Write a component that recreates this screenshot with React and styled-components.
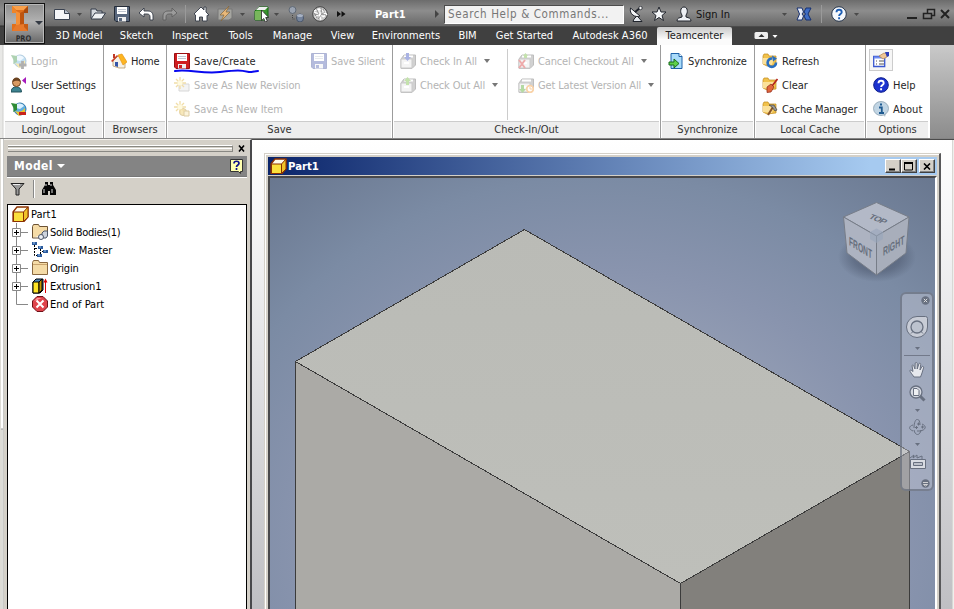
import React from "react";
import styled, { createGlobalStyle, css } from "styled-components";

const Global = createGlobalStyle`
  * { box-sizing: border-box; }
  html, body { margin: 0; padding: 0; overflow: hidden; }
  body { font-family: "DejaVu Sans Condensed", "DejaVu Sans", sans-serif; font-size: 11px; font-stretch: condensed; color: #1c1c1c; }
`;

/* ---------- frame ---------- */
const Page = styled.div`
  width: 954px; height: 609px; overflow: hidden; display: flex; flex-direction: column; background: #d4d0c8;
`;
const Header = styled.header`
  height: 45px; flex: none; display: flex; padding-left: 4px;
  background: linear-gradient(#777 0, #8b8b8b 10px, #6b6b6b 25px, #2e2e2e 26px, #404040 27px, #404040 100%);
`;
const AppButton = styled.div`
  width: 41px; height: 41px; margin-top: 3px; flex: none; border: 1px solid #111;
  background: linear-gradient(#8e8e8e, #b2b2b2 45%, #686868); display: flex; box-shadow: inset 0 0 0 1px #b9b9b9;
`;
const HeaderMain = styled.div`flex: 1; display: flex; flex-direction: column;`;
const QuickBar = styled.div`
  height: 27px; display: flex; align-items: center; padding-top: 1px;
  background: linear-gradient(#6c6c6c, #8d8d8d 40%, #686868 95%, #3a3a3a);
`;
const Slot = styled.div`
  width: ${p => p.$w}px; margin-left: ${p => p.$ml || 0}px; flex: none; display: flex; align-items: center;
  svg { flex: none; }
`;
const Rule = styled.div`width: 1px; height: 18px; flex: none; margin-left: ${p => p.$ml}px; background: #9a9a9a;`;
const Caption = styled.div`
  font-weight: bold; font-size: 11px; color: #fff; white-space: nowrap; letter-spacing: ${p => p.$ls || 0}px;
`;
const Search = styled.div`
  width: 180px; height: 19px; margin-left: 4px; flex: none; background: #f2f2f2; border: 1px solid #4c4c4c;
  border-right-color: #fff; border-bottom-color: #fff; color: #777; line-height: 16px; padding-left: 3px;
  white-space: nowrap; font-size: 11.500px; letter-spacing: .620px;
`;
const SignIn = styled.div`width: 36px; margin-left: 4px; flex: none; color: #111; white-space: nowrap;`;
const Tabs = styled.nav`height: 18px; display: flex; padding-left: 2px; align-items: flex-end;`;
const Tab = styled.div`
  width: ${p => p.$w}px; height: 18px; line-height: 17px; text-align: center; white-space: nowrap; flex: none; color: #fff;
  ${p => p.$on && css`color: #222; background: linear-gradient(#c8c8c8, #fbfbfb 70%); border-radius: 2px 2px 0 0;`}
`;

/* ---------- ribbon ---------- */
const Ribbon = styled.div`
  height: 94px; flex: none; display: flex; padding-left: 4px; border-bottom: 1px solid #858585;
  background: linear-gradient(90deg, #e8e8e6 0 2px, #d0d0ce 3px, #fff 4px 929px, transparent 930px),
    linear-gradient(#c9c9c9, #8c8c8c);
`;
const Group = styled.section`
  width: ${p => p.$w}px; flex: none; display: flex; flex-direction: column; background: #fff;
  border-right: 1px solid ${p => (p.$last ? "#fff" : "#9c9c9c")};
`;
const Columns = styled.div`flex: 1; display: flex; padding: 4px 0 0 7px;`;
const Column = styled.div`width: ${p => (p.$w ? `${p.$w}px` : "auto")}; flex: none;`;
const ColumnRule = styled.div`width: 1px; height: 71px; background: #ccc; margin-right: 10px;`;
const GroupTitle = styled.div`
  height: 17px; margin: 0 1px; background: #eee; border-top: 1px solid #ccc; text-align: center; line-height: 15px;
  color: #333; white-space: nowrap;
`;
const Command = styled.div`
  height: 24px; display: flex; align-items: center; white-space: nowrap; color: ${p => (p.$off ? "#b4b4b4" : "#262626")};
  letter-spacing: ${p => p.$ls || 0}px;
  > svg:first-child { margin-right: 4px; flex: none; opacity: ${p => (p.$off ? 0.38 : 1)}; }
`;
const ToolFrame = styled.div`
  width: 24px; height: 22px; margin: 0 0 2px -4px; border: 1px solid #ccc; background: #f6f6f6; display: flex; align-items: center; justify-content: center;
`;
const Marked = styled.div`position: relative;`;
const Squiggle = styled.svg`position: absolute; left: 0; top: 19px;`;
const More = styled.i`
  margin-left: ${p => p.$ml || 7}px; border: ${p => p.$s || 3}px solid transparent; border-top: 4px solid ${p => p.$c || "#777"}; border-bottom: 0;
`;

/* ---------- body ---------- */
const Body = styled.main`flex: 1; display: flex; min-height: 0;`;
const EdgeStrip = styled.div`
  width: 4px; flex: none; background: linear-gradient(#fff 0 289px, #999 290px, #dcdcd8 291px);
  border-left: 1px solid #dddbd5; border-right: 1px solid #c9c9c6;
`;
const Browser = styled.aside`
  width: 248px; flex: none; background: #d4d0c8; border-right: 2px solid #48484b; border-top: 1px solid #f3f1ec;
  padding: 5px 3px 0 3px; display: flex; flex-direction: column;
`;
const Grip = styled.div`height: 11px; display: flex; flex: none; padding-left: 1px;`;
const GripBar = styled.div`
  width: 225px; height: 7px; border: 1px solid #898883; border-top-color: #fff; border-left: 0; margin-right: 5px;
  background: linear-gradient(#898883 0 1px, #d4d0c8 1px 2px, #fff 2px 3px, #d4d0c8 3px);
`;
const PanelTitle = styled.div`
  height: 21px; width: 240px; flex: none; background: #848484; display: flex; align-items: center; padding: 0 4px 0 7px; color: #fff;
  font-weight: bold; font-size: 12px; justify-content: space-between;
  border-bottom: 1px solid #777;
`;
const PanelName = styled.span`display: flex; align-items: center; letter-spacing: .400px;`;
const PanelTools = styled.div`
  height: 27px; flex: none; border-top: 1px solid #fff; display: flex; align-items: center; padding: 0 0 4px 3px;
`;
const ToolRule = styled.div`width: 1px; height: 18px; background: #888; margin: 0 7px 0 8px; box-shadow: 1px 0 #fff;`;
const Tree = styled.div`
  width: 240px; flex: 1; background: #fff; border: 1px solid #000; border-bottom: 0; padding-left: 4px;
`;
const Node = styled.div`
  height: 18px; display: flex; align-items: center; white-space: nowrap; color: #000; letter-spacing: ${p => p.$ls || 0}px;
  svg { flex: none; margin-right: 2px; }
`;
const Workspace = styled.div`
  flex: 1; border-top: 1px solid #4b4b4b; padding: 13px 0 0 12px; display: flex;
  background: linear-gradient(#fff 0, #f6f6f7 80px, #bfbfc3 470px);
`;
const Document = styled.div`
  width: 677px; flex: none; background: #d4d0c8; border: solid; border-width: 1px 2px 0 1px; border-color: #d4d0c8 #58585a #000 #d4d0c8;
  padding: 0 2px 0 3px; box-shadow: inset 1px 1px #fff; display: flex; flex-direction: column;
`;
const DocTitle = styled.div`
  height: 18px; margin-top: 3px; flex: none; display: flex; align-items: center; padding: 0 2px 0 2px;
  background: linear-gradient(90deg, #0a246a, #a6caf0 90%);
`;
const DocName = styled(Caption)`flex: 1; margin-left: 1px; font-size: 11.300px;`;
const WinButton = styled.div`
  width: 16px; height: 14px; margin-right: ${p => p.$mr || 0}px; background: #d4d0c8; border: 1px solid; border-color: #fff #404040 #404040 #fff;
  box-shadow: inset -1px -1px #848484; display: flex; align-items: center; justify-content: center;
`;
const Viewport = styled.div`
  flex: 1; margin-top: 1px; border: 2px solid #48484b; border-right-color: #fff; border-bottom: 0; position: relative; overflow: hidden;
  background: radial-gradient(ellipse 480px 430px at 333px 360px, #9ba4b8 0, #949eb4 45%, #8994ae 62%, #7b8ba4 84%, #68768e 110%);
`;
const Scene = styled.svg`display: block;`;
const NavBar = styled.div`
  position: absolute; left: 630px; top: 114px; width: 34px; height: 199px; border: 2px solid rgba(90,96,112,.6); border-radius: 6px;
  background: rgba(205,208,220,.42); display: flex; flex-direction: column; align-items: center;
`;
const NavRule = styled.div`width: 26px; height: 1px; background: #72798a; margin: 5px 0;`;
const NavGap = styled.div`height: ${p => p.$h}px; flex: none;`;
const NavCorner = styled.div`align-self: flex-end; margin: 2px 2px 0 0; height: 9px; display: flex;`;
const TailStrip = styled.div`width: 2px; margin: -13px 0 0 auto; background: #efefed; border-left: 1px solid #d8d8d4;`;

/* ---------- icons ---------- */
const I = ({ w = 16, h = 16, children, ...r }) => (
  <svg width={w} height={h} viewBox={`0 0 ${w} ${h}`} fill="none" {...r}>{children}</svg>
);
const Down = ({ c = "#4a4a4a" }) => <I w={5} h={3}><path d="M0 0h5L2.500 3z" fill={c} /></I>;

const AppLogo = () => (
  <I w={39} h={39}>
    <path d="M7 2h16v7h-4v11h4v7H7v-7h4V9H7z" fill="#e06f1c" />
    <path d="M7 2h16l-4 4h-8z" fill="#f9a04a" /><path d="M7 2l4 4v3H7z" fill="#ef8529" />
    <path d="M11 7l4 2v11l-4 4z" fill="#f59038" />
    <path d="M19 7l-4 2v14l4-2z" fill="#bd5410" /><path d="M7 27l4-6 8-1 4 7z" fill="#e8792a" /><path d="M19 9h4V2l-4 4z" fill="#a94a0e" /><path d="M23 20h-4v3l4 4z" fill="#c65d16" />
    <path d="M30 17h8l-4 4z" fill="#343a44" />
    <text x="11" y="36.500" fontSize="7.500" fill="#222" stroke="#222" strokeWidth=".300" textLength="15">PRO</text>
  </I>
);
const NewIcon = () => <I><path d="M.500 3.500h10l5 4v6H.500z" fill="#f5f6f8" stroke="#3a4250" /><path d="M10.500 3.500v4h5" fill="#b8c0cc" stroke="#3a4250" /></I>;
const OpenIcon = () => <I><path d="M1 12V3h5l1 2h5v2" fill="#d4d9df" stroke="#333b49" /><path d="M1 13l4-6h10.500l-4 6z" fill="#eef1f4" stroke="#333b49" /></I>;
const SaveIcon = ({ c = "#59677d", s = "#252c38" }) => (
  <I><path d="M.500.500h15v15H2l-1.500-1.500z" fill={c} stroke={s} /><path d="M3 1h10v7H3z" fill="#fff" /><path d="M4 3.500h8M4 5.500h8" stroke="#c0c6d0" /><path d="M4 11h8v4.500H4z" fill="#eee" /><path d="M5 12h3v3H5z" fill={c} /></I>
);
const UndoIcon = () => <I><path d="M1 7l5-5v3h4c4 0 5 3 5 5v4h-3v-3c0-2-1-3-3-3H6v3z" fill="#fff" stroke="#333a46" strokeWidth=".900" /></I>;
const RedoIcon = () => <I><path d="M15 7l-5-5v3H6c-4 0-5 3-5 5v4h3v-3c0-2 1-3 3-3h3v3z" fill="#9b9b9b" stroke="#5f5f5f" strokeWidth=".900" /></I>;
const HomeWhite = () => <I><path d="M1 8l7-7 3 3V1h2v5l3 3-2 .500V15H9.500v-4h-3v4H2.500V9z" fill="#fff" stroke="#333a46" strokeWidth=".900" /></I>;
const BoltIcon = () => <I><path d="M1 3h14v9l-3 2H1z" fill="#a5a5a0" stroke="#777" /><path d="M12 0L3 9h4l-3 6 9-9H9z" fill="#e9b878" stroke="#80643e" strokeWidth=".700" /></I>;
const CubePick = () => <I w={15}><path d="M1 5l4-4h9v10l-3 3H1z" fill="#39952c" stroke="#176a12" /><path d="M5 1h9l-3 3H2z" fill="#eee" /><path d="M1 5h9v9H1z" fill="#78b65b" /><path d="M7.500 4v10.500l2.300-2 1.500 3.500 2-1-1.600-3.500h3z" fill="#fff" stroke="#222" strokeWidth=".800" /></I>;
const LinkIcon = () => <I><circle cx="4.500" cy="4" r="3.500" fill="#9aa3b1" stroke="#5f6874" /><ellipse cx="12" cy="12" rx="3.500" ry="4" fill="#75849c" stroke="#4b576b" /><ellipse cx="12" cy="9.500" rx="3" ry="1.500" fill="#a9b3c4" /><path d="M4.500 9v4H7" stroke="#444" strokeDasharray="1 1" /></I>;
const MeshBall = () => <I><circle cx="8" cy="8" r="7.300" fill="#c9c9c9" stroke="#444" /><path d="M2 5l5-2 5 2 3 4M3 11l4-3 5 3M7 3v5l2 6M12 5l-5 3M2 6l5 2M12 11l1-6" stroke="#fff" strokeWidth="1.300" /><path d="M4 2l3 6-4 1M9 2l1 6 4 1M6 13l4-5M2 7l3 5M11 3l2 4" stroke="#777" strokeWidth=".700" /></I>;
const DishIcon = () => <I w={14}><path d="M4 15.500h9l-3-3.500-2-2-3 3z" fill="#e4e7ec" stroke="#20242c" /><path d="M1.500 2C0 8 6 12 11 10z" fill="#f5f6f8" stroke="#20242c" /><path d="M6 6l5-4" stroke="#20242c" strokeWidth="2" /><circle cx="11.500" cy="2" r="1.700" fill="#fff" stroke="#20242c" strokeWidth=".800" /></I>;
const StarIcon = () => <I><path d="M8 1l2 5h5l-4 3.500 1.500 5L8 11.500l-4.500 3 1.500-5L1 6h5z" fill="#f4f6f8" stroke="#20242c" /></I>;
const UserIcon = () => <I><path d="M1 15c0-3 2-3 5-4V9C4 7 4 1 8 1s4 6 2 8v2c3 1 5 1 5 4z" fill="#eef0f4" stroke="#20242c" /></I>;
const XIcon = () => <I><path d="M1 2h5l1.500 4L6 8l1.500 2L6 14H1l2.500-6z" fill="#e8edf8" stroke="#173070" /><path d="M15 2h-5L8 6l1.500 2L8 10l2 4h5l-3-6z" fill="#3e6cc4" stroke="#173070" /></I>;
const HelpRound = ({ bg = "#f5f8fc", fg = "#1f5fb5", st = "#27364c" }) => <I><circle cx="8" cy="8" r="7.300" fill={bg} stroke={st} /><path d="M5.500 6.200c0-3.200 5.200-3.200 5.200 0C10.700 8 8.100 8 8.100 10M8.100 11.300v2" stroke={fg} strokeWidth="1.900" /></I>;

const Globe = ({ kind }) => (
  <I><circle cx="9" cy="8" r="6" fill="#5faee0" stroke="#3177a9" /><path d="M5 4c3-3 7-1 8 1l-4 3-4-1z" fill="#d9efff" /><path d="M0 2l6 1v6l-4 2c2-4-1-6-2-9z" fill="#2e8b36" /><path d="M4 10c4 2 8 0 10-3v5l-6 3z" fill="#ecc42f" />
    {kind === "out" ? <path d="M8 11h7v3H8z" fill="#c8221c" /> : <path d="M11.500 8v8M8 12h7.500" stroke="#333" strokeWidth="2.800" />}</I>
);
const UserSet = () => <I><path d="M0 15c0-7 10.500-7 10.500 0z" fill="#3d8390" stroke="#22525c" /><circle cx="5.500" cy="5.500" r="4" fill="#d99a62" stroke="#73461f" /><path d="M1.500 5c0-6 8-6 8 0-3-2-5-1-8 0z" fill="#6b4321" /><path d="M15 0v7l-4-3.500z" fill="#a51abb" /></I>;
const HomeColor = () => <I><path d="M2 8l5-5 7 5v7H8l-6-2z" fill="#f5f1e9" stroke="#b08c55" strokeWidth=".700" /><path d="M7 2l4-1 5 8-4 3z" fill="#fdb522" stroke="#e08e0b" strokeWidth=".600" /><path d="M0 8l6-6 1 1-5.500 6z" fill="#c9422a" /><path d="M2 1h2v4H2z" fill="#c03a27" /><path d="M4 9h3v5l-3-1z" fill="#3556a8" /></I>;
const Sun = () => <path d="M6 0v12M0 6h12M2 2l8 8M10 2l-8 8" stroke="#dca91d" strokeWidth="1.300" />;
const NewRev = () => <I><path d="M5 7h10v7H5z" fill="#e0e0e0" stroke="#999" /><Sun /><circle cx="6" cy="6" r="2.500" fill="#fff2ad" /></I>;
const NewItem = () => <I><circle cx="9" cy="11" r="3.500" fill="#ecc34d" stroke="#a67a12" /><path d="M10 10h5v5h-5z" fill="#f7e2a0" stroke="#a67a12" /><Sun /><circle cx="6" cy="6" r="2.500" fill="#fff2ad" /></I>;
const Tray = ({ kind }) => (
  <I><path d="M1 6l3-4h11.500v10L12 15.500H1z" fill="#888" stroke="#555" /><path d="M1 6h11v9H1z" fill="#e4e4e4" stroke="#777" /><path d="M4 3.500h9M4 10h5" stroke="#fff" strokeWidth="2" />
    {kind === "in" && <path d="M6 0h3v4h2L7.500 8 4 4h2z" fill="#2036b8" />}
    {kind === "out" && <path d="M6 8h3V4h2L7.500 0 4 4h2z" fill="#65b52a" />}
    {kind === "x" && <><path d="M1 7l6 8M7 7l-6 8" stroke="#d32323" strokeWidth="2" /><path d="M6 5h3V3h1L7.500 0 5 3h1z" fill="#65b52a" /></>}
    {kind === "get" && <><path d="M3 8h3v4h2l-3.500 4L1 12h2z" fill="#3f9f10" /><circle cx="12" cy="12" r="3.300" fill="#fff" stroke="#f08a1a" strokeWidth="1.700" /><path d="M12 10v2h2" stroke="#f08a1a" /></>}</I>
);
const SyncIcon = () => <I><path d="M3 .500h8l3 3v12H3z" fill="#a9dbfa" stroke="#1e62a9" /><path d="M11 .500v3h3" fill="#fff" stroke="#1e62a9" /><path d="M1 9h5V6l5 4.500L6 15v-3H1z" fill="#5ed04a" stroke="#166b1c" /></I>;
const Folder = ({ kind }) => (
  <I><path d="M1 3l1-2h4l1 2h7v9l-9 1-4-2z" fill="#f1c24c" stroke="#c18a1a" strokeWidth=".700" /><path d="M1 5h11l-2 7-9-1z" fill="#fbe19a" />
    {kind === "refresh" && <><path d="M14 9.500a4.200 4.200 0 1 1-3.800-4" stroke="#2a6fc0" strokeWidth="2.600" /><path d="M10 2.500l5 3-4 3z" fill="#2a6fc0" /></>}
    {kind === "clear" && <><path d="M15.500 2L10 9" stroke="#b4231d" strokeWidth="1.700" /><path d="M5 10l4-3 3 3-3 5-4 .500z" fill="#e0673c" stroke="#8c2417" strokeWidth=".700" /></>}
    {kind === "manage" && <><path d="M11 6l-5 8" stroke="#8a5528" strokeWidth="2" /><path d="M7 4h5l3 5-2 1-3-4z" fill="#999" stroke="#444" strokeWidth=".700" /></>}</I>
);
const OptionsIcon = () => <I><path d="M.700 4.500h11v10H.700z" fill="#fff" stroke="#3a57d0" strokeWidth="1.300" /><path d="M1 5.500h11" stroke="#6f8cf0" strokeWidth="2" /><path d="M3 9h1M6 9h5M3 12h1M6 12h5" stroke="#555" strokeWidth="1.200" /><path d="M6 4l5-3 3 1v3l-4 2z" fill="#f0c795" stroke="#a8743b" strokeWidth=".600" /><path d="M12 0h4v4l-2 1z" fill="#2d3eb8" /></I>;
const InfoIcon = () => <I><path d="M10 13l2 3 1-4z" fill="#aebfcb" /><ellipse cx="8" cy="7.500" rx="7.500" ry="7" fill="#c1d5e4" stroke="#8ba1b1" strokeWidth=".800" /><path d="M6 6.500h2.800V12M6 12h5" stroke="#1f5b91" strokeWidth="1.800" /><path d="M7 2.500h2v2H7z" fill="#1f5b91" /></I>;

const Part = () => <I w={17}><path d="M1 6l4-5h11v10l-4 4.500H1z" fill="#fffbe8" stroke="#8a3000" strokeWidth="1.300" /><path d="M1.500 6h10v9.500h-10z" fill="#fae03c" stroke="#8a3000" /><path d="M11.500 6L16 1v10l-4.500 4.500z" fill="#efc32a" stroke="#8a3000" /></I>;
const Bodies = () => <I><path d="M.500 14V2.500l1-2h5l1 2h8V9" fill="#f5dba6" stroke="#6c5234" /><path d="M.500 14h7" stroke="#6c5234" /><path d="M10 9l2-2h3.500v5L14 14h-4z" fill="#ccd2dc" stroke="#4d5668" /><circle cx="9" cy="13" r="2.500" fill="#eceff4" stroke="#4d5668" /></I>;
const ViewRep = () => <I><path d="M2.500 3v10.500H6M3 6.500h3M8.500 7v5M10 9.500h2" stroke="#000" strokeDasharray="2 1" /><path d="M0 0h5v3H0zM6 4h5v3H6zM11 8h5v3h-5zM5 12h5v3H5z" fill="#2c5b9c" /><path d="M1 1h2M7 5h2M12 9h2M6 13h2" stroke="#9fc8f2" /></I>;
const FolderPlain = () => <I><path d="M.500 14.500v-12l1-2h5l1 2h8v12z" fill="#f5dba6" stroke="#8a6840" /><path d="M1 4.500h14" stroke="#c9a36d" /></I>;
const Extrude = () => <I><path d="M1 4l3-3h7v11l-3 3H1z" fill="#4b88bf" stroke="#000" /><path d="M1 4h6v11H1z" fill="#ffe527" stroke="#000" /><path d="M7 4l3-3v11l-3 3z" fill="#c59300" stroke="#000" /><path d="M13.500 15V2" stroke="#d00" /><path d="M11.500 4.500l2-4 2 4z" fill="#d00" /></I>;
const EndIcon = () => <I><path d="M5 .500h6L15.500 5v6L11 15.500H5L.500 11V5z" fill="#df444c" stroke="#6e1118" /><path d="M2 5l3-3h5z" fill="#ff9a9a" /><path d="M4.500 4.500l7 7M11.500 4.500l-7 7" stroke="#fff" strokeWidth="2" /></I>;
const Branch = ({ end }) => (
  <I w={20} h={18}>
    {end ? <path d="M4.500 0v9.500H16" stroke="#888" /> : <><path d="M4.500 0v18M9 9.500h7" stroke="#888" /><path d="M.500 5.500h8v8h-8z" fill="#fff" stroke="#888" /><path d="M2 9.500h5M4.500 7v5" stroke="#000" /></>}
  </I>
);
const BranchBox = styled.span`width: 20px; height: 18px; overflow: hidden; display: flex; flex: none;`;
const Funnel = () => <I w={15}><path d="M1 2.500h13L9 8v6H6V8z" fill="#999" stroke="#222" /><path d="M3 3.500h7" stroke="#eee" /></I>;
const Binoculars = () => <I><path d="M4 1h3v3h2V1h3v3l3 5v5H9v-4H7v4H1V9l3-5z" fill="#050505" /><path d="M3 8v4M11 8v4M5 3v2M10 3v2" stroke="#ddd" /></I>;
const HelpNote = () => <I w={13} h={15}><path d="M.500.500h12v12h-2v2l-2-2h-8z" fill="#ffffb0" stroke="#333" /><path d="M4 4.500c0-3 5-3 5 0C9 6 6.500 6 6.500 8M6.500 9v2" stroke="#10128a" strokeWidth="1.700" /></I>;
const CloseX = ({ s = 6 }) => <I w={8} h={7}><path d={`M1 .500l${s} 6M${s + 1} .500l-${s} 6`} stroke="#000" strokeWidth="1.600" /></I>;

const RibbonGroup = ({ children, title, w, last }) => (
  <Group $w={w} $last={last}><Columns>{children}</Columns><GroupTitle>{title}</GroupTitle></Group>
);

const tabs = [["3D Model", 64], ["Sketch", 51], ["Inspect", 56], ["Tools", 45], ["Manage", 59], ["View", 41], ["Environments", 86], ["BIM", 37], ["Get Started", 77], ["Autodesk A360", 94]];

const Model = () => (
  <Scene width="665" height="431" viewBox="270 178 665 431">
    <defs>
      <linearGradient id="topFace" x1="0" y1="0" x2="0" y2="1"><stop stopColor="#babbb6" /><stop offset="1" stopColor="#bebfba" /></linearGradient>
      <radialGradient id="cubeShade"><stop stopColor="#49546a" stopOpacity=".7" /><stop offset=".6" stopColor="#49546a" stopOpacity=".5" /><stop offset="1" stopColor="#49546a" stopOpacity="0" /></radialGradient>
    </defs>
    <path d="M295.500 361.500L680.500 583.500V620H295.500z" fill="#abaaa6" />
    <path d="M909.500 451.500L680.500 583.500V620H909.500z" fill="#82807c" />
    <path d="M524.500 229.500L909.500 451.500 680.500 583.500 295.500 361.500z" fill="url(#topFace)" />
    <path d="M524.500 229.500L909.500 451.500 680.500 583.500 295.500 361.500zM295.500 361V620M680.500 583V620M909.500 451V620" stroke="#3b3b3b" fill="none" shapeRendering="crispEdges" />
    <ellipse cx="877" cy="257" rx="39" ry="25" fill="url(#cubeShade)" />
    <g stroke="#777d88" strokeWidth="1" strokeLinejoin="round">
      <path d="M876.500 202.500L909 217 876.500 236 843.500 217z" fill="#b3b9c7" />
      <path d="M843.500 217L876.500 236V275L847 253z" fill="#adb3c1" />
      <path d="M909 217L876.500 236V275L906 253z" fill="#a8aebb" />
    </g>
    <path d="M870 232l6.500-3.500 6.500 3.500v7l-6.500 4-6.500-4z" fill="#98a5bb" opacity=".6" />
    <g fill="#666e7c" fontFamily="Liberation Sans, sans-serif" fontWeight="bold" fontSize="10">
      <text transform="matrix(.86 .34 -.6 .6 868 218)" textLength="19">TOP</text>
      <text transform="matrix(.82 .5 0 1.25 849 245)" textLength="28" lengthAdjust="spacingAndGlyphs">FRONT</text>
      <text transform="matrix(.82 -.48 0 1.2 883 256)" textLength="26" lengthAdjust="spacingAndGlyphs">RIGHT</text>
    </g>
  </Scene>
);

const navC = "#687080";
const Navigation = () => (
  <NavBar>
    <NavCorner><I w={9} h={9}><circle cx="4.500" cy="4.500" r="4.200" fill={navC} /><path d="M2.800 2.800l3.400 3.400M6.200 2.800L2.800 6.200" stroke="#ddd" /></I></NavCorner>
    <NavGap $h={10} />
    <I w={24} h={24}><path d="M12 1.500h8.500q2 0 2 2V12A10.500 10.500 0 1 1 12 1.500z" fill="#c8ccd6" stroke={navC} /><path d="M6 18.500l3-3M18 18.500l-3-3" stroke={navC} /><circle cx="12" cy="12" r="6" stroke={navC} fill="#bcc2ce" strokeWidth="1.300" /></I>
    <NavGap $h={8} /><Down c={navC} />
    <NavRule />
    <I w={16} h={17}><path d="M5 16C3 13 1 11 .800 9.500 2 8.500 3 10 4 10.500L3 4.500c1-1 2 0 2 1L6 8 6.200 2c.800-1 2-.500 2 .500V8L10 2.500c1-.700 2 0 1.700 1L11 9l2-3.500c1-.500 2 .200 1.500 1.500L13 12l-1.500 4z" fill="#e6e8ed" stroke={navC} /></I>
    <NavGap $h={7} />
    <I w={17} h={17}><path d="M10 10l5.500 5.500" stroke={navC} strokeWidth="3" /><circle cx="7" cy="7" r="6" fill="#d5d9e1" stroke={navC} strokeWidth="1.300" /><path d="M4.500 3.500h3.500l2 2v5H4.500z" fill="#eef0f3" stroke={navC} /></I>
    <NavGap $h={7} /><Down c={navC} /><NavGap $h={7} />
    <I w={17} h={17}><g stroke={navC}><path d="M4 12c-5-2-4-5 0-6M13 5c5 2 4 6-2 7H8M5 11c1 6 6 6 7 0M5 9c0-11 6-11 6-3" /><path d="M8 5h3M9.500 3.500v3M6 8.500h3M7.500 7v3M12 8h3M13.500 6.500v3" /></g></I>
    <NavGap $h={7} /><Down c={navC} /><NavGap $h={7} />
    <I w={17} h={17}><path d="M1 5l4-3-1 3 4-3v3l5-2v3" stroke={navC} /><path d="M1.500 6.500h15v9h-15z" fill="#d9dce3" stroke={navC} /><path d="M4.500 9.500h9v3h-9z" fill="#bcc1cb" stroke={navC} /></I>
    <NavGap $h={7} />
    <NavCorner><I w={9} h={9}><circle cx="4.500" cy="4.500" r="4.200" fill={navC} /><path d="M2 3.500h5M2.500 5.500h4l-2 1.500z" stroke="#ddd" strokeWidth=".900" /></I></NavCorner>
  </NavBar>
);

export default function App() {
  return (
    <Page>
      <Global />
      <Header>
        <AppButton><AppLogo /></AppButton>
        <HeaderMain>
          <QuickBar>
            <Slot $w={16} $ml={9}><NewIcon /></Slot>
            <Slot $w={5} $ml={7}><Down /></Slot>
            <Slot $w={16} $ml={8}><OpenIcon /></Slot>
            <Slot $w={16} $ml={8}><SaveIcon /></Slot>
            <Slot $w={16} $ml={8}><UndoIcon /></Slot>
            <Slot $w={16} $ml={8}><RedoIcon /></Slot>
            <Rule $ml={7} />
            <Slot $w={16} $ml={7}><HomeWhite /></Slot>
            <Slot $w={16} $ml={8}><BoltIcon /></Slot>
            <Slot $w={5} $ml={7}><Down /></Slot>
            <Slot $w={15} $ml={9}><CubePick /></Slot>
            <Slot $w={5} $ml={5}><Down /></Slot>
            <Slot $w={16} $ml={9}><LinkIcon /></Slot>
            <Slot $w={16} $ml={8}><MeshBall /></Slot>
            <Slot $w={9} $ml={9}><I w={9} h={6}><path d="M0 0l4 3-4 3zM4.500 0l4 3-4 3z" fill="#111" /></I></Slot>
            <Slot $w={33} $ml={29}><Caption $ls={0.15}>Part1</Caption></Slot>
            <Slot $w={5} $ml={27}><I w={5} h={8}><path d="M0 0l4 4-4 4z" fill="#444" /></I></Slot>
            <Search>Search Help &amp; Commands...</Search>
            <Slot $w={14} $ml={5}><DishIcon /></Slot>
            <Slot $w={16} $ml={8}><StarIcon /></Slot>
            <Slot $w={16} $ml={9}><UserIcon /></Slot>
            <SignIn>Sign In</SignIn>
            <Slot $w={5} $ml={50}><Down /></Slot>
            <Slot $w={16} $ml={9}><XIcon /></Slot>
            <Rule $ml={9} />
            <Slot $w={16} $ml={9}><HelpRound /></Slot>
            <Slot $w={5} $ml={7}><Down /></Slot>
            <Slot $w={44} $ml={48}>
              <I w={44} h={12}><path d="M0 10h10" stroke="#222" strokeWidth="2" /><path d="M20.500 5V1.500h7v6H25M16.500 5.500h8v5h-8z" stroke="#222" strokeWidth="1.500" /><path d="M34 2l8 8M42 2l-8 8" stroke="#222" strokeWidth="2" /></I>
            </Slot>
          </QuickBar>
          <Tabs>
            {tabs.map(([t, w]) => <Tab key={t} $w={w}>{t}</Tab>)}
            <Tab $w={75} $on>Teamcenter</Tab>
            <Slot $w={26} $ml={22}>
              <I w={26} h={16}><rect x=".500" y="3" width="13.500" height="7" rx="1.500" fill="#eee" /><path d="M4.500 8h6l-3-3z" fill="#333" /><path d="M18.500 6h5L21 9z" fill="#fff" /></I>
            </Slot>
          </Tabs>
        </HeaderMain>
      </Header>

      <Ribbon>
        <RibbonGroup title="Login/Logout" w={100}>
          <Column>
            <Command $off><Globe />Login</Command>
            <Command $ls={-0.12}><UserSet />User Settings</Command>
            <Command><Globe kind="out" />Logout</Command>
          </Column>
        </RibbonGroup>
        <RibbonGroup title="Browsers" w={63}><Command $ls={-0.2}><HomeColor />Home</Command></RibbonGroup>
        <RibbonGroup title="Save" w={226}>
          <Column $w={137}>
            <Marked>
              <Command $ls={0.1}><SaveIcon c="#cf1d20" s="#9b0f12" />Save/Create</Command>
              <Squiggle width="88" height="8" viewBox="0 0 88 8" fill="none"><path d="M1 3C16 1 28 6 46 4S66 2 75 4c4 0 6-1 9-1" stroke="#0808f0" strokeWidth="2" strokeLinecap="round" /></Squiggle>
            </Marked>
            <Command $off $ls={-0.1}><NewRev />Save As New Revision</Command>
            <Command $off $ls={-0.05}><NewItem />Save As New Item</Command>
          </Column>
          <Column><Command $off $ls={-0.15}><SaveIcon c="#3c4fa8" s="#2f3f90" />Save Silent</Command></Column>
        </RibbonGroup>
        <RibbonGroup title="Check-In/Out" w={268}>
          <Column $w={107}>
            <Command $off $ls={-0.1}><Tray kind="in" />Check In All<More /></Command>
            <Command $off $ls={-0.15}><Tray kind="out" />Check Out All<More /></Command>
          </Column>
          <ColumnRule />
          <Column>
            <Command $off $ls={-0.15}><Tray kind="x" />Cancel Checkout All<More /></Command>
            <Command $off $ls={-0.14}><Tray kind="get" />Get Latest Version All<More /></Command>
          </Column>
        </RibbonGroup>
        <RibbonGroup title="Synchronize" w={94}><Command $ls={-0.15}><SyncIcon />Synchronize</Command></RibbonGroup>
        <RibbonGroup title="Local Cache" w={111}>
          <Column>
            <Command><Folder kind="refresh" />Refresh</Command>
            <Command><Folder kind="clear" />Clear</Command>
            <Command $ls={-0.15}><Folder kind="manage" />Cache Manager</Command>
          </Column>
        </RibbonGroup>
        <RibbonGroup title="Options" w={64} last>
          <Column>
            <ToolFrame><OptionsIcon /></ToolFrame>
            <Command><HelpRound bg="#1c33cf" fg="#fff" st="#0c1d8c" />Help</Command>
            <Command><InfoIcon />About</Command>
          </Column>
        </RibbonGroup>
      </Ribbon>

      <Body>
        <EdgeStrip />
        <Browser>
          <Grip><GripBar /><CloseX s={5} /></Grip>
          <PanelTitle><PanelName>Model<More $c="#fff" $ml={4} $s={4} /></PanelName><HelpNote /></PanelTitle>
          <PanelTools><Funnel /><ToolRule /><Binoculars /></PanelTools>
          <Tree>
            <Node><Part />Part1</Node>
            <Node $ls={-0.27}><BranchBox><Branch /></BranchBox><Bodies />Solid Bodies(1)</Node>
            <Node $ls={-0.08}><BranchBox><Branch /></BranchBox><ViewRep />View: Master</Node>
            <Node $ls={-0.25}><BranchBox><Branch /></BranchBox><FolderPlain />Origin</Node>
            <Node $ls={-0.15}><BranchBox><Branch /></BranchBox><Extrude />Extrusion1</Node>
            <Node><BranchBox><Branch end /></BranchBox><EndIcon />End of Part</Node>
          </Tree>
        </Browser>
        <Workspace>
          <Document>
            <DocTitle>
              <Part /><DocName>Part1</DocName>
              <WinButton><I w={10} h={9}><path d="M1 7.500h6" stroke="#000" strokeWidth="2" /></I></WinButton>
              <WinButton $mr={2}><I w={10} h={9}><path d="M.500 1h8v7h-8z" stroke="#000" /><path d="M0 1h9" stroke="#000" strokeWidth="2" /></I></WinButton>
              <WinButton><CloseX /></WinButton>
            </DocTitle>
            <Viewport><Model /><Navigation /></Viewport>
          </Document>
          <TailStrip />
        </Workspace>
      </Body>
    </Page>
  );
}
